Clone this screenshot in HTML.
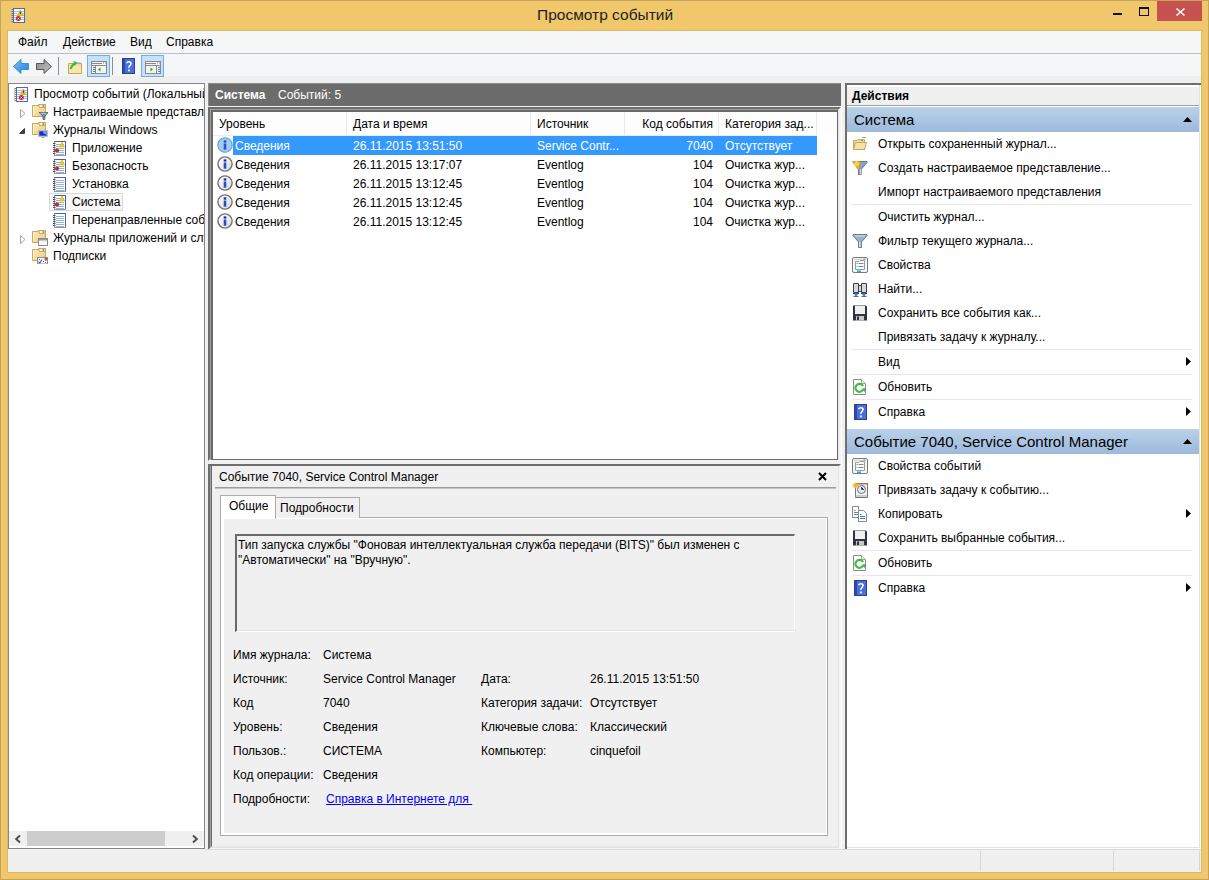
<!DOCTYPE html>
<html><head><meta charset="utf-8">
<style>
*{margin:0;padding:0;box-sizing:border-box}
html,body{width:1209px;height:880px;overflow:hidden;background:#F0C86B;font-family:"Liberation Sans",sans-serif;font-size:12px;color:#000}
.a{position:absolute}
.t{position:absolute;white-space:nowrap;line-height:14px}
svg{position:absolute;overflow:visible}
</style></head><body>
<svg width="0" height="0" style="position:absolute">
<defs>
<symbol id="logp" viewBox="0 0 16 16">
 <rect x="3.5" y="1.5" width="11" height="14" fill="#fff" stroke="#8A96B0"/>
 <path d="M3.5 1.5H14.5V15" fill="none" stroke="#4A5FA8" stroke-width="1"/>
 <path d="M5 4.5H13M5 6.5H13M5 8.5H13M5 10.5H13M5 12.5H13M5 14.5H13" stroke="#8FB3DA" stroke-width="1"/>
 <path d="M2 3.5H4.5M2 5.5H4.5M2 7.5H4.5M2 9.5H4.5M2 11.5H4.5M2 13.5H4.5" stroke="#555" stroke-width="1"/>
 <rect x="4" y="15" width="11" height="1" fill="#9A9A9A"/>
</symbol>
<symbol id="logw" viewBox="0 0 16 16">
 <use href="#logp"/>
 <path d="M8.5 7H13.5L11 2z" fill="#F2D020" stroke="#D8A800" stroke-width="0.6"/>
 <circle cx="6" cy="10.5" r="2.1" fill="#D2232A"/>
</symbol>
<symbol id="folder" viewBox="0 0 16 16">
 <defs><linearGradient id="gfo" x1="0" y1="0" x2="1" y2="1"><stop offset="0" stop-color="#FCEDC2"/><stop offset="1" stop-color="#EDC978"/></linearGradient></defs>
 <path d="M6.5 0.5H13.5V3.5H6.5z" fill="#EDD08A" stroke="#C9A55A"/>
 <rect x="8" y="1.2" width="4" height="1.6" fill="#fff"/><rect x="10.5" y="1.2" width="1.5" height="1.6" fill="#3D8FE0"/>
 <path d="M0.5 1.5H6.5L7.5 3.5H13.5V12.5H0.5z" fill="url(#gfo)" stroke="#CFA655"/>
 <path d="M1.5 3V12" stroke="#FFF6D8" stroke-width="1"/>
</symbol>
<symbol id="fcust" viewBox="0 0 16 16">
 <use href="#folder"/>
 <path d="M7 8.5H16L12.8 12V15.5H11V12z" fill="#7F97B0" stroke="#3E5068" stroke-width="0.8"/>
 <path d="M8.5 9.2H14" stroke="#D8E4EE" stroke-width="0.8"/>
</symbol>
<symbol id="fwin" viewBox="0 0 16 16">
 <use href="#folder"/>
 <rect x="6.5" y="8.5" width="9" height="6" fill="#fff" stroke="#BDBDBD"/>
 <rect x="7.2" y="9.2" width="7.6" height="4.6" fill="#1030C8"/>
 <path d="M11 9.2H14.8V13L11 11z" fill="#7A9CF0"/>
 <path d="M9 16H13" stroke="#666" stroke-width="1"/>
</symbol>
<symbol id="fapp" viewBox="0 0 16 16">
 <use href="#folder"/>
 <rect x="6.5" y="8.5" width="9" height="7" fill="#F8F8F8" stroke="#8A8A8A"/>
 <rect x="7" y="9" width="8" height="1.5" fill="#9A9A9A"/>
</symbol>
<symbol id="fsub" viewBox="0 0 16 16">
 <use href="#folder"/>
 <rect x="5.5" y="9.5" width="10" height="6.5" fill="#fff" stroke="#8A8A8A"/>
 <rect x="12.5" y="10" width="2.5" height="2.5" fill="#E04040"/>
 <path d="M6.5 13.5L7.8 15L10 11.5" fill="none" stroke="#2060C0" stroke-width="1.1"/>
 <rect x="7" y="11" width="1" height="1" fill="#3070C0"/><rect x="11" y="13" width="1" height="1" fill="#3070C0"/><rect x="13" y="14" width="1" height="1" fill="#888"/>
</symbol>
<symbol id="info" viewBox="0 0 16 16">
 <defs><linearGradient id="gin" x1="0" y1="0" x2="1" y2="1"><stop offset="0" stop-color="#FFFFFF"/><stop offset="1" stop-color="#D8D8D8"/></linearGradient></defs>
 <circle cx="8" cy="8" r="7.1" fill="url(#gin)" stroke="#737373" stroke-width="1.4"/>
 <rect x="6.7" y="6.5" width="2.6" height="6.2" fill="#1E4FC8"/>
 <rect x="6.7" y="3.4" width="2.6" height="2.2" fill="#0F2E9A"/>
</symbol>
<symbol id="infos" viewBox="0 0 16 16">
 <circle cx="8" cy="8" r="7.2" fill="#A3CCF3" stroke="#5E9CDA" stroke-width="1.1"/>
 <rect x="6.7" y="6.5" width="2.6" height="6.2" fill="#2256CC"/>
 <rect x="6.7" y="3.4" width="2.6" height="2.2" fill="#1E48BC"/>
</symbol>
<symbol id="evroot" viewBox="0 0 16 16">
 <rect x="3.5" y="1.5" width="11" height="14" fill="#F4F8FF" stroke="#5068B0"/>
 <path d="M4 4.5H14M4 6.5H14M4 8.5H14M4 10.5H14M4 12.5H14" stroke="#A9C3E6" stroke-width="1"/>
 <path d="M1.5 2.5h2M1.5 4.5h2M1.5 6.5h2M1.5 8.5h2M1.5 10.5h2M1.5 12.5h2M1.5 14.5h2" stroke="#6A6A6A" stroke-width="0.9"/><path d="M1 3.5h1M1 5.5h1M1 7.5h1M1 9.5h1M1 11.5h1M1 13.5h1" stroke="#C8C8C8" stroke-width="0.8"/>
 <path d="M7.6 8.4H13.2L10.4 3z" fill="#F7D512" stroke="#C8A000" stroke-width="0.6"/>
 <rect x="9.9" y="4.6" width="1" height="2.6" fill="#333"/>
 <circle cx="8.3" cy="11.6" r="2.5" fill="#D0202A"/>
 <path d="M7.4 10.7L9.2 12.5M9.2 10.7L7.4 12.5" stroke="#fff" stroke-width="0.9"/>
</symbol>
<symbol id="openf" viewBox="0 0 16 16">
 <rect x="10" y="1" width="4" height="1" fill="#4CD24C"/>
 <path d="M1.5 4.5H5L6 3.5H12.5V13.5H1.5z" fill="#F3DA98" stroke="#C8A65A"/>
 <rect x="9" y="4" width="2" height="1" fill="#5A9BE0"/>
 <path d="M3.5 6.5H14.5L12.5 13.5H1.5z" fill="#F6E2A6" stroke="#C8A65A"/>
</symbol>
<symbol id="filtc" viewBox="0 0 16 16">
 <path d="M1 1.5H15V2.5L9.5 9V14.5H6.5V9L1 2.5z" fill="#8FA3B8" stroke="#51647A" stroke-width="0.8"/>
 <path d="M9.5 9V14.5H8V9z" fill="#C9D6E3"/>
 <path d="M1 1.5H8V2.5L6.5 9V11L1 2.5z" fill="#F8A725"/>
 <circle cx="4.5" cy="3.5" r="2.5" fill="#FFD040"/>
</symbol>
<symbol id="filt" viewBox="0 0 16 16">
 <path d="M1 1.5H15V2.5L9.5 9V14.5H6.5V9L1 2.5z" fill="#9AB0C6" stroke="#51647A" stroke-width="0.8"/>
 <path d="M3 3H13" stroke="#DDE7F0" stroke-width="1"/>
 <path d="M7 9V14H8.5V9z" fill="#D7E2EC"/>
</symbol>
<symbol id="props" viewBox="0 0 16 16">
 <rect x="0.5" y="0.5" width="15" height="15" rx="1.5" fill="#F6F6F6" stroke="#7A7A7A"/>
 <path d="M2 2.5H14" stroke="#D0D0D0"/>
 <rect x="11.5" y="1.5" width="2" height="1" fill="#6C8FB8"/>
 <path d="M3.5 12.5V4.5H7L8 3.5H12.5V12.5z" fill="#fff" stroke="#9A9A9A"/>
 <rect x="4.5" y="6" width="1.2" height="1.2" fill="#19A8F0"/>
 <path d="M6.5 6.5H11.5M6.5 9.5H11.5M4.5 9.5H5.5" stroke="#8A8A8A"/>
 <rect x="5" y="13.5" width="4" height="1.5" fill="#19B5F5"/>
</symbol>
<symbol id="binoc" viewBox="0 0 16 16">
 <path d="M1.5 2.5H6.5V11.5H1.5z M9.5 2.5H14.5V11.5H9.5z" fill="#D8D8D8" stroke="#3A4050"/>
 <rect x="6.5" y="4.5" width="3" height="6" fill="#D8D8D8" stroke="#3A4050"/>
 <path d="M1 12.5H7M9 12.5H15" stroke="#3A4050"/>
 <circle cx="4" cy="13.5" r="1.6" fill="#2A8CE8"/><circle cx="12" cy="13.5" r="1.6" fill="#2A8CE8"/>
 <path d="M1.5 15.5H6.5M9.5 15.5H14.5" stroke="#3A4050" stroke-width="0.8"/>
</symbol>
<symbol id="floppy" viewBox="0 0 16 16">
 <path d="M1 0.5H14L15 1.5V15.5H1z" fill="#2E3440"/>
 <rect x="3" y="1" width="10" height="8" fill="#F0F0F0"/>
 <rect x="4" y="11" width="8" height="4.5" fill="#C8C8C8"/>
 <rect x="5" y="11.5" width="2" height="3.5" fill="#2E3440"/>
</symbol>
<symbol id="refr" viewBox="0 0 16 16">
 <path d="M1.5 0.5H9.5L13.5 4.5V15.5H1.5z" fill="#fff" stroke="#8A8A8A"/>
 <path d="M9.5 0.5V4.5H13.5" fill="#EEE" stroke="#AAA"/>
 <path d="M10.8 11A4 4 0 1 1 11 7" fill="none" stroke="#3EBE3E" stroke-width="2.2"/>
 <path d="M9 10L13 13L13 9z" fill="#3EBE3E"/>
</symbol>
<symbol id="help" viewBox="0 0 16 16">
 <rect x="2.5" y="0.5" width="12" height="15" fill="#4A6FD8" stroke="#2C3E8C"/>
 <rect x="3" y="1" width="2" height="14" fill="#2F4BB0"/>
 <path d="M6.8 5.2C6.8 3.4 11 3.2 11 5.6C11 7.4 8.8 7.6 8.8 9.8" fill="none" stroke="#fff" stroke-width="1.6"/>
 <rect x="8" y="11.5" width="1.8" height="1.8" fill="#fff"/>
</symbol>
<symbol id="task" viewBox="0 0 16 16">
 <path d="M3.5 1.5H15.5V15.5H3.5z" fill="#F2F2F2" stroke="#777"/>
 <rect x="4" y="1" width="12" height="1.5" fill="#B0704A"/>
 <circle cx="9.5" cy="7.5" r="4" fill="#DDEEFF" stroke="#6A7080" stroke-width="1"/>
 <path d="M9.5 5V7.5H12" stroke="#4A5070" stroke-width="1"/>
 <path d="M3.5 14H15.5" stroke="#AAA"/>
 <circle cx="3.5" cy="3.5" r="2.2" fill="#F8B22A"/>
 <path d="M0.5 3.5H6.5M3.5 0.5V6.5M1.5 1.5L5.5 5.5M5.5 1.5L1.5 5.5" stroke="#F8B22A" stroke-width="0.8"/>
</symbol>
<symbol id="copy" viewBox="0 0 16 16">
 <path d="M0.5 0.5H6.5V11.5H0.5z" fill="#fff" stroke="#8A8A8A"/>
 <path d="M2 4.5H3.5M2 6.5H6M2 8.5H6" stroke="#4A90D0"/>
 <path d="M6.5 4.5H11.5L14.5 7.5V15.5H6.5z" fill="#fff" stroke="#8A8A8A"/>
 <path d="M8 8.5H9.5M8 10.5H13M8 12.5H13" stroke="#2E7FD0"/>
</symbol>
<symbol id="arr" viewBox="0 0 16 16"></symbol>
<symbol id="back" viewBox="0 0 16 15">
 <defs><linearGradient id="gb" x1="0" y1="0" x2="1" y2="1"><stop offset="0" stop-color="#7CC8F8"/><stop offset="1" stop-color="#1E78D8"/></linearGradient></defs>
 <path d="M0.5 7.5L8 0.5V4.5H15.5V10.5H8V14.5z" fill="url(#gb)" stroke="#3A8EDC" stroke-width="1"/>
</symbol>
<symbol id="fwd" viewBox="0 0 16 15">
 <defs><linearGradient id="gf" x1="0" y1="0" x2="1" y2="1"><stop offset="0" stop-color="#8A8A8A"/><stop offset="1" stop-color="#C4C4C4"/></linearGradient></defs>
 <path d="M15.5 7.5L8 0.5V4.5H0.5V10.5H8V14.5z" fill="url(#gf)" stroke="#555" stroke-width="1"/>
</symbol>
<symbol id="fup" viewBox="0 0 14 14">
 <path d="M0.5 3.5H13.5V13.5H0.5z" fill="#F6DC96" stroke="#C9A657"/>
 <rect x="1" y="6" width="12" height="7" fill="#F9E6AE"/>
 <rect x="9" y="2.5" width="4" height="1.5" fill="#7AB5EA"/>
 <path d="M2.5 9C3.5 6 5 4.5 7.5 3.5" fill="none" stroke="#33C033" stroke-width="2"/>
 <path d="M5.5 1L9.5 2.5L6.5 5.5z" fill="#33C033"/>
</symbol>
<symbol id="tree1" viewBox="0 0 16 13">
 <rect x="0.5" y="0.5" width="15" height="12" fill="#F4F4F4" stroke="#8A8A8A"/>
 <path d="M1 2.5H11M1 4.5H15" stroke="#8A8A8A"/>
 <rect x="12" y="1.5" width="1" height="1" fill="#8A8A8A"/><rect x="14" y="1.5" width="1" height="1" fill="#8A8A8A"/>
 <path d="M4.5 5V12.5" stroke="#8A8A8A"/>
 <rect x="2" y="6" width="2" height="1" fill="#3A86D6"/><rect x="2" y="8" width="2" height="1" fill="#3A86D6"/><rect x="2" y="10" width="2" height="1" fill="#3A86D6"/>
 <path d="M9.5 6.5V10.5L7 8.5z" fill="#22B022"/>
</symbol>
<symbol id="tree2" viewBox="0 0 16 13">
 <rect x="0.5" y="0.5" width="15" height="12" fill="#F4F4F4" stroke="#8A8A8A"/>
 <path d="M1 2.5H11M1 4.5H15" stroke="#8A8A8A"/>
 <rect x="12" y="1.5" width="1" height="1" fill="#8A8A8A"/><rect x="14" y="1.5" width="1" height="1" fill="#8A8A8A"/>
 <path d="M11.5 5V12.5" stroke="#8A8A8A"/>
 <rect x="13" y="6" width="2" height="1" fill="#3A86D6"/><rect x="13" y="8" width="2" height="1" fill="#3A86D6"/><rect x="13" y="10" width="2" height="1" fill="#3A86D6"/>
 <path d="M5.5 6.5V10.5L8 8.5z" fill="#22B022"/>
</symbol>
</defs></svg>
<!-- window frame -->
<div class="a" style="left:0;top:0;width:1209px;height:880px;border:1px solid #C5A35A;background:#F0C86B"></div>
<!-- title -->
<svg style="left:10px;top:7px" width="16" height="16"><use href="#evroot"/></svg>
<div class="a" style="left:7px;top:30px;width:1195px;height:843px;border:1px solid #DDB865"></div>
<div class="t" style="left:537px;top:6px;font-size:15.5px;line-height:18px;color:#222">Просмотр событий</div>
<!-- controls -->
<div class="a" style="left:1113px;top:13px;width:9px;height:2px;background:#111"></div>
<div class="a" style="left:1139px;top:7px;width:10px;height:9px;border:1px solid #111;border-top-width:2px"></div>
<div class="a" style="left:1157px;top:1px;width:45px;height:20px;background:#C75050"></div>
<svg style="left:1176px;top:8px" width="9" height="8"><path d="M0.5 0.5L8.5 7.5M8.5 0.5L0.5 7.5" stroke="#fff" stroke-width="1.6"/></svg>

<!-- client -->
<div class="a" style="left:8px;top:31px;width:1193px;height:841px;background:#F0F0F0"></div>
<!-- menu bar -->
<div class="a" style="left:8px;top:31px;width:1193px;height:22px;background:#F5F6F7"></div>
<div class="a" style="left:8px;top:53px;width:1193px;height:1px;background:#BDBDBD"></div>
<div class="t" style="left:18px;top:35px">Файл</div>
<div class="t" style="left:63px;top:35px">Действие</div>
<div class="t" style="left:130px;top:35px">Вид</div>
<div class="t" style="left:166px;top:35px">Справка</div>
<!-- toolbar -->
<div class="a" style="left:8px;top:54px;width:1193px;height:22px;background:#F5F6F7"></div>
<div class="a" style="left:8px;top:76px;width:1193px;height:7px;background:#EFEFEF"></div>
<svg style="left:13px;top:59px" width="16" height="15"><use href="#back"/></svg>
<svg style="left:36px;top:59px" width="16" height="15"><use href="#fwd"/></svg>
<div class="a" style="left:58px;top:57px;width:1px;height:18px;background:#8E8E8E"></div>
<svg style="left:68px;top:60px" width="14" height="14"><use href="#fup"/></svg>
<div class="a" style="left:87px;top:55px;width:23px;height:22px;border:1px solid #6BAEEC;background:#C9E1F8"></div>
<svg style="left:91px;top:61px" width="16" height="13"><use href="#tree1"/></svg>
<div class="a" style="left:112px;top:57px;width:1px;height:18px;background:#8E8E8E"></div>
<svg style="left:120px;top:58px" width="16" height="16"><use href="#help"/></svg>
<div class="a" style="left:141px;top:55px;width:23px;height:22px;border:1px solid #6BAEEC;background:#C9E1F8"></div>
<svg style="left:145px;top:61px" width="16" height="13"><use href="#tree2"/></svg>

<div class="a" style="left:8px;top:83px;width:197px;height:766px;border:1px solid #828790;background:#fff;overflow:hidden">
 <div class="a" style="left:-9px;top:-84px;width:1209px;height:880px">
 <svg style="left:13px;top:86px" width="16" height="16"><use href="#evroot"/></svg>
 <div class="t" style="left:34px;top:87px">Просмотр событий (Локальный)</div>
 <svg style="left:20px;top:109px" width="6" height="9"><path d="M0.5 0.5L5 4.5L0.5 8.5z" fill="#fff" stroke="#A6A6A6"/></svg>
 <svg style="left:32px;top:104px" width="16" height="16"><use href="#fcust"/></svg>
 <div class="t" style="left:53px;top:105px">Настраиваемые представления</div>
 <svg style="left:19px;top:128px" width="6" height="6"><path d="M5.5 0.5V5.5H0.5z" fill="#404040" stroke="#404040"/></svg>
 <svg style="left:32px;top:122px" width="16" height="16"><use href="#fwin"/></svg>
 <div class="t" style="left:53px;top:123px">Журналы Windows</div>
 <svg style="left:51px;top:140px" width="16" height="16"><use href="#logw"/></svg>
 <div class="t" style="left:72px;top:141px">Приложение</div>
 <svg style="left:51px;top:158px" width="16" height="16"><use href="#logw"/></svg>
 <div class="t" style="left:72px;top:159px">Безопасность</div>
 <svg style="left:51px;top:176px" width="16" height="16"><use href="#logp"/></svg>
 <div class="t" style="left:72px;top:177px">Установка</div>
 <div class="a" style="left:49px;top:193px;width:74px;height:18px;border:1px solid #DADADA;background:#F7F7F7"></div>
 <svg style="left:51px;top:194px" width="16" height="16"><use href="#logw"/></svg>
 <div class="t" style="left:72px;top:195px">Система</div>
 <svg style="left:51px;top:212px" width="16" height="16"><use href="#logp"/></svg>
 <div class="t" style="left:72px;top:213px">Перенаправленные события</div>
 <svg style="left:20px;top:235px" width="6" height="9"><path d="M0.5 0.5L5 4.5L0.5 8.5z" fill="#fff" stroke="#A6A6A6"/></svg>
 <svg style="left:32px;top:230px" width="16" height="16"><use href="#fapp"/></svg>
 <div class="t" style="left:53px;top:231px">Журналы приложений и служб</div>
 <svg style="left:32px;top:248px" width="16" height="16"><use href="#fsub"/></svg>
 <div class="t" style="left:53px;top:249px">Подписки</div>
 <div class="a" style="left:9px;top:831px;width:195px;height:15px;background:#F0F0F0"></div>
 <div class="a" style="left:27px;top:831px;width:138px;height:15px;background:#CDCDCD"></div>
 <svg style="left:15px;top:835px" width="6" height="8"><path d="M5 0.5L1.2 4L5 7.5" fill="none" stroke="#505050" stroke-width="2"/></svg>
 <svg style="left:192px;top:835px" width="6" height="8"><path d="M1 0.5L4.8 4L1 7.5" fill="none" stroke="#505050" stroke-width="2"/></svg>
 </div>
</div>

<!-- center header -->
<div class="a" style="left:208px;top:83px;width:633px;height:23px;background:#6C6C6C;border-top:1px solid #8C8C8C;border-left:1px solid #8C8C8C"></div>
<div class="t" style="left:215px;top:88px;color:#fff;font-weight:bold">Система</div>
<div class="t" style="left:278px;top:88px;color:#fff">Событий: 5</div>
<!-- list frame -->
<div class="a" style="left:208px;top:107px;width:633px;height:354px;border-top:2px solid #6E6E6E;border-left:2px solid #6E6E6E;border-right:2px solid #F4F4F4;border-bottom:2px solid #F4F4F4;background:#fff"></div>
<div class="a" style="left:210px;top:109px;width:629px;height:351px;border-top:1px solid #A0A0A0;border-left:1px solid #A0A0A0;border-right:1px solid #E3E3E3;border-bottom:1px solid #E3E3E3"></div>
<div class="a" style="left:211px;top:110px;width:627px;height:350px;border-top:2px solid #696969;border-left:2px solid #696969;border-right:1px solid #696969;border-bottom:1px solid #696969;background:#fff"></div>
<div class="a" style="left:213px;top:112px;width:624px;height:23px;background:#FDFDFE"></div>
<div class="a" style="left:213px;top:135px;width:604px;height:1px;background:#E6EEF7"></div>
<div class="a" style="left:346px;top:112px;width:1px;height:23px;background:#E3EAF3"></div>
<div class="a" style="left:530px;top:112px;width:1px;height:23px;background:#E3EAF3"></div>
<div class="a" style="left:624px;top:112px;width:1px;height:23px;background:#E3EAF3"></div>
<div class="a" style="left:718px;top:112px;width:1px;height:23px;background:#E3EAF3"></div>
<div class="a" style="left:816px;top:112px;width:1px;height:23px;background:#E3EAF3"></div>
<div class="t" style="left:219px;top:117px">Уровень</div>
<div class="t" style="left:353px;top:117px">Дата и время</div>
<div class="t" style="left:537px;top:117px">Источник</div>
<div class="t" style="left:613px;width:100px;text-align:right;top:117px">Код события</div>
<div class="t" style="left:725px;top:117px">Категория зад...</div>
<div class="a" style="left:233px;top:136px;width:584px;height:19px;background:#3399FF"></div>
<svg style="left:217px;top:137px" width="16" height="16"><use href="#infos"/></svg>
<div class="t" style="left:235px;top:139px;color:#fff">Сведения</div>
<div class="t" style="left:353px;top:139px;color:#fff">26.11.2015 13:51:50</div>
<div class="t" style="left:537px;top:139px;color:#fff">Service Contr...</div>
<div class="t" style="left:613px;width:100px;text-align:right;top:139px;color:#fff">7040</div>
<div class="t" style="left:725px;top:139px;color:#fff">Отсутствует</div>
<svg style="left:217px;top:156px" width="16" height="16"><use href="#info"/></svg>
<div class="t" style="left:235px;top:158px;color:#000">Сведения</div>
<div class="t" style="left:353px;top:158px;color:#000">26.11.2015 13:17:07</div>
<div class="t" style="left:537px;top:158px;color:#000">Eventlog</div>
<div class="t" style="left:613px;width:100px;text-align:right;top:158px;color:#000">104</div>
<div class="t" style="left:725px;top:158px;color:#000">Очистка жур...</div>
<svg style="left:217px;top:175px" width="16" height="16"><use href="#info"/></svg>
<div class="t" style="left:235px;top:177px;color:#000">Сведения</div>
<div class="t" style="left:353px;top:177px;color:#000">26.11.2015 13:12:45</div>
<div class="t" style="left:537px;top:177px;color:#000">Eventlog</div>
<div class="t" style="left:613px;width:100px;text-align:right;top:177px;color:#000">104</div>
<div class="t" style="left:725px;top:177px;color:#000">Очистка жур...</div>
<svg style="left:217px;top:194px" width="16" height="16"><use href="#info"/></svg>
<div class="t" style="left:235px;top:196px;color:#000">Сведения</div>
<div class="t" style="left:353px;top:196px;color:#000">26.11.2015 13:12:45</div>
<div class="t" style="left:537px;top:196px;color:#000">Eventlog</div>
<div class="t" style="left:613px;width:100px;text-align:right;top:196px;color:#000">104</div>
<div class="t" style="left:725px;top:196px;color:#000">Очистка жур...</div>
<svg style="left:217px;top:213px" width="16" height="16"><use href="#info"/></svg>
<div class="t" style="left:235px;top:215px;color:#000">Сведения</div>
<div class="t" style="left:353px;top:215px;color:#000">26.11.2015 13:12:45</div>
<div class="t" style="left:537px;top:215px;color:#000">Eventlog</div>
<div class="t" style="left:613px;width:100px;text-align:right;top:215px;color:#000">104</div>
<div class="t" style="left:725px;top:215px;color:#000">Очистка жур...</div>

<!-- details frame -->
<div class="a" style="left:208px;top:464px;width:633px;height:386px;border-top:2px solid #6E6E6E;border-left:2px solid #6E6E6E;border-right:2px solid #F4F4F4;border-bottom:2px solid #F4F4F4;background:#F0F0F0"></div>
<div class="a" style="left:210px;top:466px;width:629px;height:382px;border-left:1px solid #A0A0A0;border-right:1px solid #E3E3E3;border-bottom:1px solid #E3E3E3"></div>
<div class="a" style="left:211px;top:466px;width:627px;height:381px;border-left:1px solid #696969;border-bottom:1px solid #E8E8E8"></div>
<div class="t" style="left:219px;top:470px">Событие 7040, Service Control Manager</div>
<svg style="left:818px;top:472px" width="9" height="9"><path d="M1 1L8 8M8 1L1 8" stroke="#000" stroke-width="2"/></svg>
<div class="a" style="left:215px;top:487px;width:621px;height:1px;background:#9C9C9C"></div>
<div class="a" style="left:215px;top:488px;width:621px;height:1px;background:#C4C4C4"></div>
<!-- tab page -->
<div class="a" style="left:220px;top:517px;width:608px;height:319px;border:1px solid #ACACAC;background:#fff"></div>
<div class="a" style="left:224px;top:519px;width:602px;height:314px;background:#F0F0F0"></div>
<div class="a" style="left:275px;top:497px;width:85px;height:21px;border:1px solid #ACACAC;border-bottom:none;background:#F0F0F0"></div>
<div class="a" style="left:220px;top:495px;width:56px;height:24px;border:1px solid #ACACAC;border-bottom:none;background:#fff"></div>
<div class="t" style="left:229px;top:499px">Общие</div>
<div class="t" style="left:280px;top:501px">Подробности</div>
<!-- textbox -->
<div class="a" style="left:235px;top:534px;width:560px;height:98px;border-top:2px solid #6A6A6A;border-left:2px solid #6A6A6A;border-right:1px solid #fff;border-bottom:1px solid #fff;background:#F0F0F0"></div>
<div class="a" style="left:237px;top:630px;width:558px;height:1px;background:#E3E3E3"></div>
<div class="t" style="left:238px;top:538px;line-height:15px">Тип запуска службы "Фоновая интеллектуальная служба передачи (BITS)" был изменен с<br>"Автоматически" на "Вручную".</div>
<!-- fields -->
<div class="t" style="left:233px;top:648px">Имя журнала:</div><div class="t" style="left:323px;top:648px">Система</div>
<div class="t" style="left:233px;top:672px">Источник:</div><div class="t" style="left:323px;top:672px">Service Control Manager</div>
<div class="t" style="left:481px;top:672px">Дата:</div><div class="t" style="left:590px;top:672px">26.11.2015 13:51:50</div>
<div class="t" style="left:233px;top:696px">Код</div><div class="t" style="left:323px;top:696px">7040</div>
<div class="t" style="left:481px;top:696px">Категория задачи:</div><div class="t" style="left:590px;top:696px">Отсутствует</div>
<div class="t" style="left:233px;top:720px">Уровень:</div><div class="t" style="left:323px;top:720px">Сведения</div>
<div class="t" style="left:481px;top:720px">Ключевые слова:</div><div class="t" style="left:590px;top:720px">Классический</div>
<div class="t" style="left:233px;top:744px">Пользов.:</div><div class="t" style="left:323px;top:744px">СИСТЕМА</div>
<div class="t" style="left:481px;top:744px">Компьютер:</div><div class="t" style="left:590px;top:744px">cinquefoil</div>
<div class="t" style="left:233px;top:768px">Код операции:</div><div class="t" style="left:323px;top:768px">Сведения</div>
<div class="t" style="left:233px;top:792px">Подробности:</div><div class="t" style="left:326px;top:792px;color:#0000FF;text-decoration:underline">Справка в Интернете для&nbsp;</div>

<!-- actions -->
<div class="a" style="left:841px;top:107px;width:1px;height:742px;background:#FFFFFF"></div>
<div class="a" style="left:845px;top:83px;width:356px;height:766px;border-top:2px solid #6E6E6E;border-left:2px solid #6E6E6E;background:#fff"></div>
<div class="a" style="left:847px;top:847px;width:353px;height:1px;background:#E3E3E3"></div>
<div class="a" style="left:1199px;top:85px;width:1px;height:763px;background:#E3E3E3"></div>
<div class="a" style="left:847px;top:85px;width:352px;height:2px;background:#fff"></div>
<div class="a" style="left:847px;top:87px;width:352px;height:18px;background:#F0F0F0"></div>
<div class="a" style="left:847px;top:105px;width:352px;height:1px;background:#A0A0A0"></div>
<div class="t" style="left:852px;top:89px;font-weight:bold">Действия</div>
<div class="a" style="left:847px;top:107px;width:352px;height:25px;background:linear-gradient(#B9D1EA,#9DB9DA)"></div>
<div class="t" style="left:854px;top:111px;font-size:15px;line-height:18px">Система</div>
<svg style="left:1183px;top:117px" width="9" height="5"><path d="M0 5L4.5 0L9 5z" fill="#000"/></svg>
<svg style="left:852px;top:136px" width="16" height="16"><use href="#openf"/></svg>
<div class="t" style="left:878px;top:137px">Открыть сохраненный журнал...</div>
<svg style="left:852px;top:160px" width="16" height="16"><use href="#filtc"/></svg>
<div class="t" style="left:878px;top:161px">Создать настраиваемое представление...</div>
<div class="t" style="left:878px;top:185px">Импорт настраиваемого представления</div>
<div class="a" style="left:852px;top:204px;width:340px;height:1px;background:#E8E8E8"></div>
<div class="t" style="left:878px;top:210px">Очистить журнал...</div>
<svg style="left:852px;top:233px" width="16" height="16"><use href="#filt"/></svg>
<div class="t" style="left:878px;top:234px">Фильтр текущего журнала...</div>
<svg style="left:852px;top:257px" width="16" height="16"><use href="#props"/></svg>
<div class="t" style="left:878px;top:258px">Свойства</div>
<svg style="left:852px;top:281px" width="16" height="16"><use href="#binoc"/></svg>
<div class="t" style="left:878px;top:282px">Найти...</div>
<svg style="left:852px;top:305px" width="16" height="16"><use href="#floppy"/></svg>
<div class="t" style="left:878px;top:306px">Сохранить все события как...</div>
<div class="t" style="left:878px;top:330px">Привязать задачу к журналу...</div>
<div class="a" style="left:852px;top:349px;width:340px;height:1px;background:#E8E8E8"></div>
<div class="t" style="left:878px;top:355px">Вид</div>
<svg style="left:1186px;top:357px" width="5" height="9"><path d="M0 0L5 4.5L0 9z" fill="#000"/></svg>
<div class="a" style="left:852px;top:374px;width:340px;height:1px;background:#E8E8E8"></div>
<svg style="left:852px;top:379px" width="16" height="16"><use href="#refr"/></svg>
<div class="t" style="left:878px;top:380px">Обновить</div>
<div class="a" style="left:852px;top:399px;width:340px;height:1px;background:#E8E8E8"></div>
<svg style="left:852px;top:404px" width="16" height="16"><use href="#help"/></svg>
<div class="t" style="left:878px;top:405px">Справка</div>
<svg style="left:1186px;top:407px" width="5" height="9"><path d="M0 0L5 4.5L0 9z" fill="#000"/></svg>

<div class="a" style="left:847px;top:429px;width:352px;height:25px;background:linear-gradient(#B9D1EA,#9DB9DA)"></div>
<div class="t" style="left:854px;top:433px;font-size:15px;line-height:18px">Событие 7040, Service Control Manager</div>
<svg style="left:1183px;top:439px" width="9" height="5"><path d="M0 5L4.5 0L9 5z" fill="#000"/></svg>
<svg style="left:852px;top:458px" width="16" height="16"><use href="#props"/></svg>
<div class="t" style="left:878px;top:459px">Свойства событий</div>
<svg style="left:852px;top:482px" width="16" height="16"><use href="#task"/></svg>
<div class="t" style="left:878px;top:483px">Привязать задачу к событию...</div>
<svg style="left:852px;top:506px" width="16" height="16"><use href="#copy"/></svg>
<div class="t" style="left:878px;top:507px">Копировать</div>
<svg style="left:1186px;top:509px" width="5" height="9"><path d="M0 0L5 4.5L0 9z" fill="#000"/></svg>
<svg style="left:852px;top:530px" width="16" height="16"><use href="#floppy"/></svg>
<div class="t" style="left:878px;top:531px">Сохранить выбранные события...</div>
<div class="a" style="left:852px;top:550px;width:340px;height:1px;background:#E8E8E8"></div>
<svg style="left:852px;top:555px" width="16" height="16"><use href="#refr"/></svg>
<div class="t" style="left:878px;top:556px">Обновить</div>
<div class="a" style="left:852px;top:575px;width:340px;height:1px;background:#E8E8E8"></div>
<svg style="left:852px;top:580px" width="16" height="16"><use href="#help"/></svg>
<div class="t" style="left:878px;top:581px">Справка</div>
<svg style="left:1186px;top:583px" width="5" height="9"><path d="M0 0L5 4.5L0 9z" fill="#000"/></svg>


<!-- status bar -->
<div class="a" style="left:8px;top:849px;width:1193px;height:23px;background:#F0F0F0"></div>
<div class="a" style="left:205px;top:849px;width:996px;height:1px;background:#DADBDC"></div>
<div class="a" style="left:980px;top:851px;width:1px;height:20px;background:#D7D7D7"></div>
<div class="a" style="left:1113px;top:851px;width:1px;height:20px;background:#D7D7D7"></div>
<div class="a" style="left:1199px;top:851px;width:1px;height:20px;background:#D7D7D7"></div>
</body></html>
